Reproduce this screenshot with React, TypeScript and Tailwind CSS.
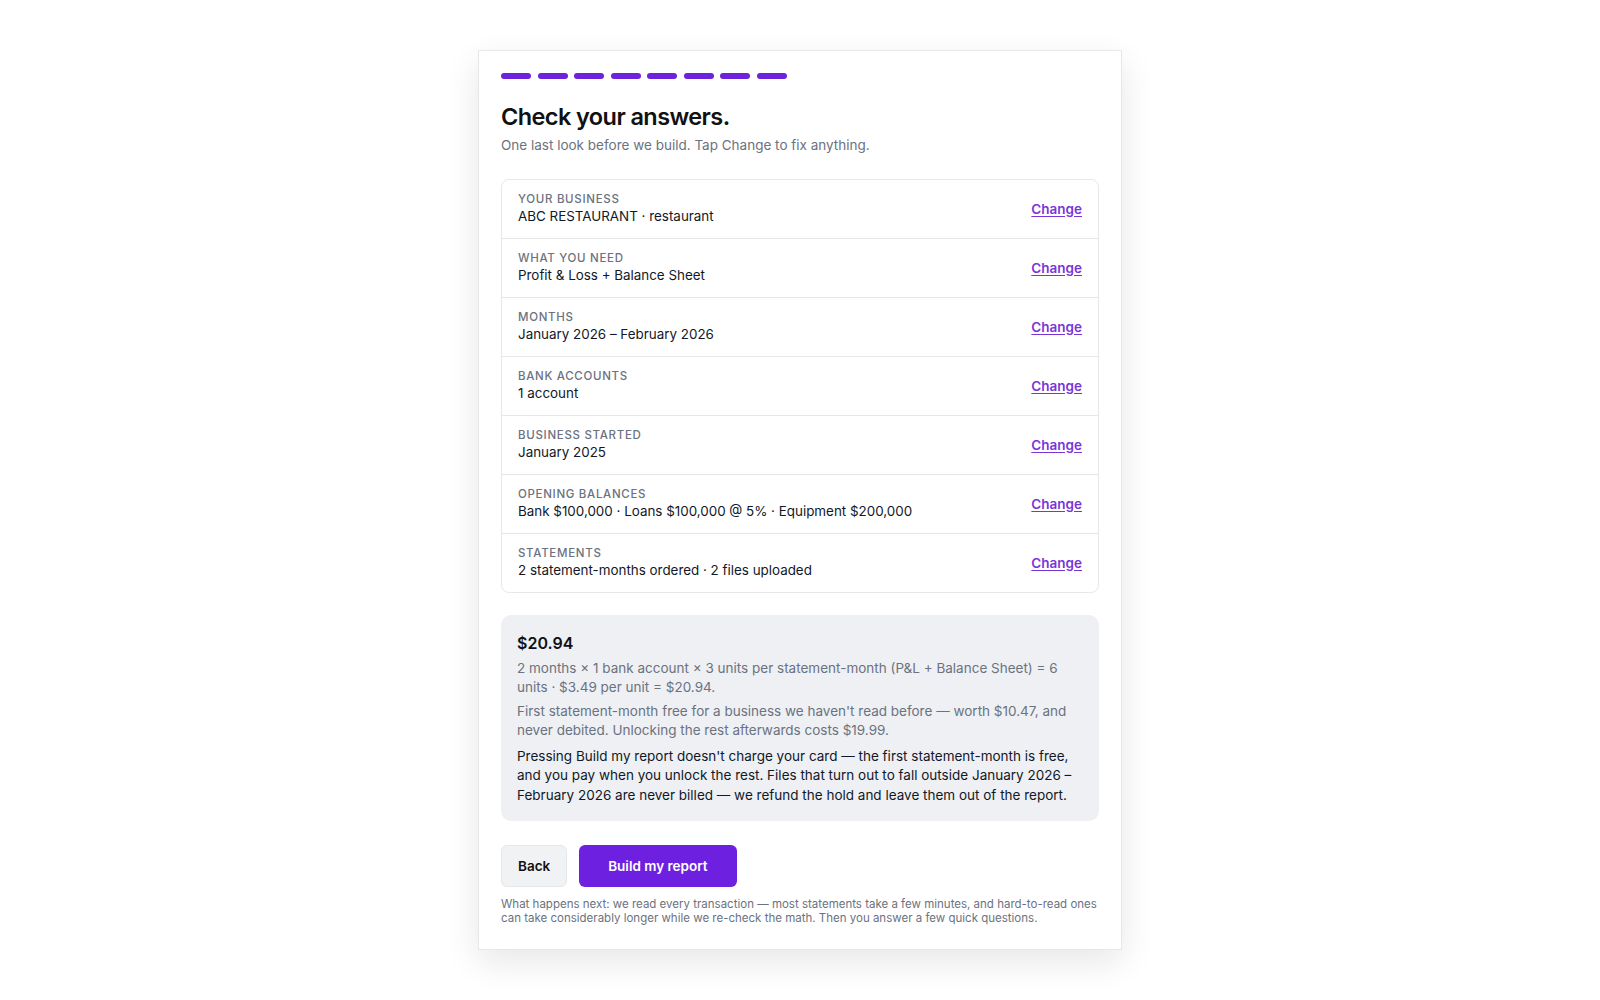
import React from "react";

type Row = { label: string; value: string };

const rows: Row[] = [
  { label: "Your business", value: "ABC RESTAURANT · restaurant" },
  { label: "What you need", value: "Profit & Loss + Balance Sheet" },
  { label: "Months", value: "January 2026 – February 2026" },
  { label: "Bank accounts", value: "1 account" },
  { label: "Business started", value: "January 2025" },
  { label: "Opening balances", value: "Bank $100,000 · Loans $100,000 @ 5% · Equipment $200,000" },
  { label: "Statements", value: "2 statement-months ordered · 2 files uploaded" },
];

export default function App() {
  return (
    <div className="flex min-h-screen items-center justify-center bg-white font-['Inter',sans-serif] text-[#111827]">
      <div className="w-[644px] border border-[#e5e7eb] bg-white px-[22px] pb-6 pt-[22px] shadow-[0_12px_32px_rgba(15,23,42,0.10)]">
        <div className="flex gap-[6.5px]">
          {Array.from({ length: 8 }).map((_, i) => (
            <span key={i} className="h-[6px] w-[30px] rounded-full bg-[#6d22dc]" />
          ))}
        </div>

        <h1 className="mt-6 text-[23.5px] font-semibold leading-7 tracking-tight text-[#111]">
          Check your answers.
        </h1>
        <p className="mt-1 text-[13.5px] leading-5 text-[#6b7280]">
          One last look before we build. Tap Change to fix anything.
        </p>

        <div className="mt-6 overflow-hidden rounded-lg border border-[#e5e7eb]">
          {rows.map((row, i) => (
            <div
              key={row.label}
              className={`flex items-center justify-between px-4 py-3 ${i > 0 ? "border-t border-[#e5e7eb]" : ""}`}
            >
              <div className="flex flex-col">
                <span className="text-[11.5px] font-medium uppercase leading-[14px] tracking-[0.06em] text-[#6b7280]">
                  {row.label}
                </span>
                <span className="text-[13.4px] leading-5 text-[#111827]">{row.value}</span>
              </div>
              <a href="#" className="text-[13.5px] font-semibold text-[#7a35d8] underline underline-offset-2">
                Change
              </a>
            </div>
          ))}
        </div>

        <div className="mt-[22px] rounded-[10px] bg-[#eef0f4] p-4">
          <div className="text-base font-semibold leading-6 text-[#111]">$20.94</div>
          <p className="mt-1 text-[13.5px] leading-[19.5px] text-[#6b7280]">
            2 months × 1 bank account × 3 units per statement-month (P&amp;L + Balance Sheet) = 6 units · $3.49 per unit = $20.94.
          </p>
          <p className="mt-1 text-[13.5px] leading-[19.5px] text-[#6b7280]">
            First statement-month free for a business we haven't read before — worth $10.47, and never debited. Unlocking the rest afterwards costs $19.99.
          </p>
          <p className="mt-1.5 text-[13.5px] leading-[19.5px] text-[#111827]">
            Pressing Build my report doesn't charge your card — the first statement-month is free, and you pay when you unlock the rest. Files that turn out to fall outside January 2026 – February 2026 are never billed — we refund the hold and leave them out of the report.
          </p>
        </div>

        <div className="mt-6 flex gap-3">
          <button className="h-[42px] rounded-md border border-[#e5e7eb] bg-[#f1f2f4] px-4 text-[13.5px] font-semibold text-[#111]">
            Back
          </button>
          <button className="h-[42px] rounded-md bg-[#6d20e0] px-[29px] text-[13.5px] font-semibold text-white">
            Build my report
          </button>
        </div>

        <p className="mt-2.5 text-[11.5px] leading-[14px] text-[#6b7280]">
          What happens next: we read every transaction — most statements take a few minutes, and hard-to-read ones can take considerably longer while we re-check the math. Then you answer a few quick questions.
        </p>
      </div>
    </div>
  );
}
